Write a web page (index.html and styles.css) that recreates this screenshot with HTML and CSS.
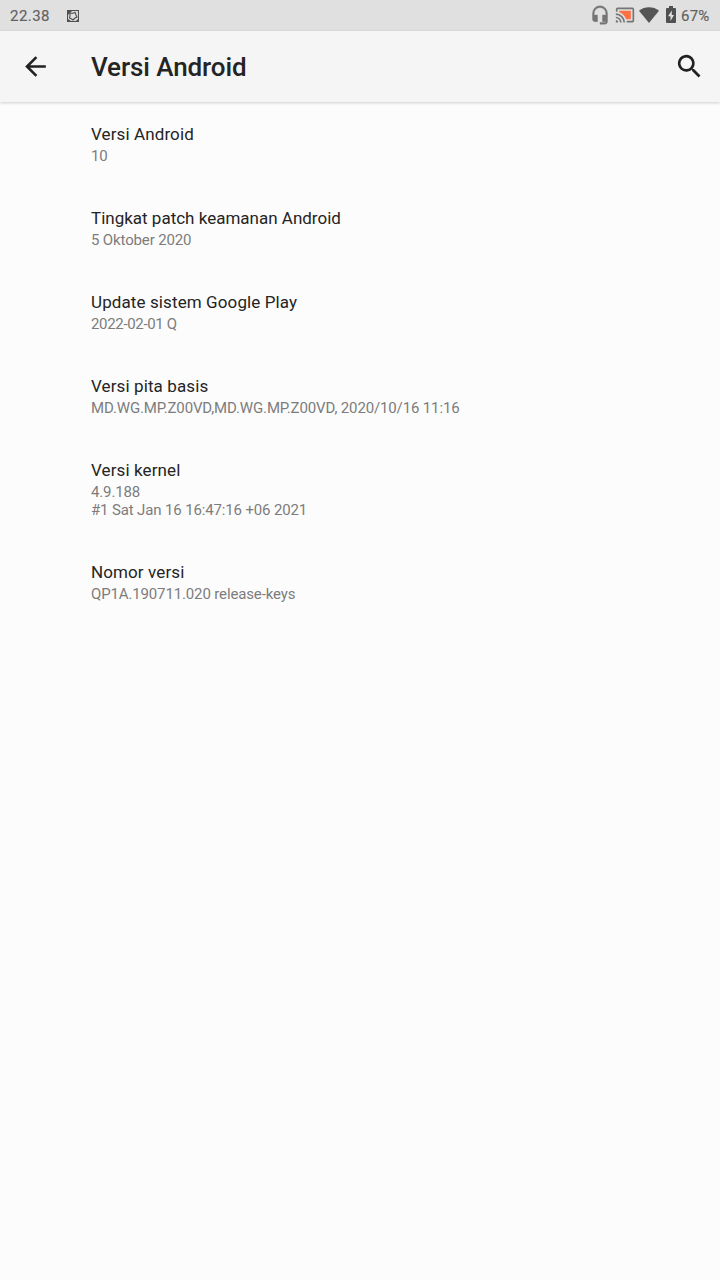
FILE: index.html
```html
<!DOCTYPE html>
<html lang="id">
<head>
<meta charset="utf-8">
<title>Versi Android</title>
<link rel="stylesheet" href="styles.css">
</head>
<body>
<div class="status">
  <span class="clock">22.38</span>
  <svg class="notif" width="12" height="12" viewBox="0 0 12 12"><path fill="#505050" d="M0 0h12v12H0z"/><path fill="#d8d8d8" d="M5 1h6v10H1V5z"/><path d="M3 3l2 .5 3-1 1 2.500 1 2-2 1-2 2-2-1.500L2.500 8 3 6z" fill="#e0e0e0" stroke="#505050" stroke-width="1.100"/><path d="M0 0h5L0 5zM1 9l3 2H1zM9 11l2-2v2z" fill="#505050"/></svg>
  <span class="spacer"></span>
  <svg class="headset" width="20" height="20" viewBox="0 0 24 24" fill="#757575" stroke="#757575" stroke-width=".5"><path d="M12 1a9 9 0 0 0-9 9v7c0 1.660 1.340 3 3 3h3v-8H5v-2a7 7 0 0 1 14 0v2h-4v8h4v1h-7v2h6c1.660 0 3-1.340 3-3V10a9 9 0 0 0-9-9z"/></svg>
  <svg class="cast" width="20" height="20" viewBox="0 0 24 24"><path fill="#ff7043" d="M5 7v1.630c3.960 1.280 7.090 4.410 8.370 8.370H19V7z"/><path fill="#757575" d="M1 18v3h3c0-1.660-1.340-3-3-3zm0-4v2a5 5 0 0 1 5 5h2a7 7 0 0 0-7-7zm0-4v2a9 9 0 0 1 9 9h2A11 11 0 0 0 1 10zM21 3H3a2 2 0 0 0-2 2v3h2V5h18v14h-7v2h7a2 2 0 0 0 2-2V5a2 2 0 0 0-2-2z"/></svg>
  <svg class="wifi" width="20" height="16" viewBox="0 0 20 16" fill="#555"><path d="M0 3.700C5.600-.8 14.400-.8 20 3.700L10 16z"/></svg>
  <svg class="battery" width="10" height="17" viewBox="0 0 10 17"><path fill="#505050" d="M3 0h4v2h2q1 0 1 1v13q0 1-1 1H1q-1 0-1-1V3q0-1 1-1h2z"/><path fill="#e0e0e0" d="M5.800 4.500L2 10.200h2.500V15L8 9H5.800z"/></svg>
  <span class="percent">67%</span>
</div>
<header class="toolbar">
  <svg class="back" width="31" height="31" viewBox="0 0 24 24" fill="#212121"><path d="M20 11H7.830l5.590-5.590L12 4l-8 8 8 8 1.410-1.410L7.830 13H20z"/></svg>
  <h1 class="title">Versi Android</h1>
  <svg class="search" width="31" height="31" viewBox="0 0 24 24" fill="#212121"><path d="M15.500 14h-.790l-.280-.270A6.500 6.500 0 1 0 13.730 14.430l.270.280v.790l5 4.990L20.490 19zm-6 0a4.500 4.500 0 1 1 0-9 4.500 4.500 0 0 1 0 9z"/></svg>
</header>
<main class="list">
  <section class="item"><div class="label">Versi Android</div><div class="value">10</div></section>
  <section class="item"><div class="label long">Tingkat patch keamanan Android</div><div class="value">5 Oktober 2020</div></section>
  <section class="item"><div class="label">Update sistem Google Play</div><div class="value date">2022-02-01 Q</div></section>
  <section class="item"><div class="label">Versi pita basis</div><div class="value">MD.WG.MP.Z00VD,MD.WG.MP.Z00VD, 2020/10/16 11:16</div></section>
  <section class="item"><div class="label">Versi kernel</div><div class="value">4.9.188<br>#1 Sat Jan 16 16:47:16 +06 2021</div></section>
  <section class="item"><div class="label">Nomor versi</div><div class="value">QP1A.190711.020 release-keys</div></section>
</main>
</body>
</html>
```
FILE: styles.css
```css
* { box-sizing: border-box; }
body { margin: 0; min-height: 1280px; background: #fcfcfc; font-family: Roboto, sans-serif; color: #242424; }
.status { height: 31px; background: #e0e0e0; display: flex; align-items: center; padding: 0 10px; font-size: 15px; color: #626262; -webkit-text-stroke: .15px #626262; }
.status svg { flex: none; }
.clock { width: 57px; letter-spacing: .45px; }
.percent { width: 29px; letter-spacing: .25px; white-space: nowrap; }
.spacer { flex: 1; }
.headset { margin-right: 5px; margin-bottom: 2px; }
.cast { margin-right: 4px; margin-bottom: 2px; }
.wifi { margin-right: 7px; margin-bottom: 2px; }
.battery { margin-right: 5px; margin-bottom: 2px; }
.toolbar { height: 71px; background: #f5f5f5; box-shadow: 0 1px 3px rgba(0,0,0,.18); display: flex; align-items: center; padding: 0 15px 0 20px; }
.back, .search { margin-bottom: 1px; }
.title { margin: 0 auto 0 40px; font-size: 26px; font-weight: 500; line-height: 32px; letter-spacing: -.1px; }
.list { padding: 20px 20px 0 91px; }
.item { padding-bottom: 42px; }
.label { font-size: 17px; line-height: 24px; letter-spacing: .11px; }
.long { letter-spacing: 0; }
.value { padding-top: 1px; margin-bottom: -1px; font-size: 15px; line-height: 18px; letter-spacing: -.14px; color: #7c7c7c; }
.date { letter-spacing: -.33px; }
```
